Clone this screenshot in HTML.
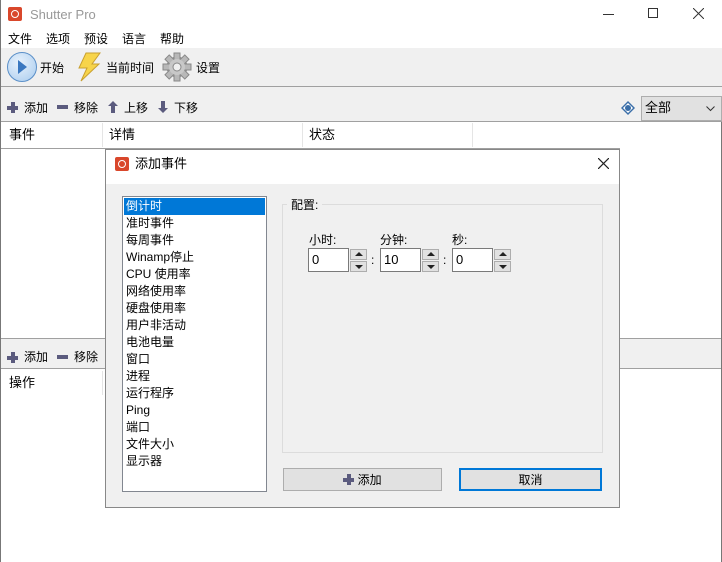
<!DOCTYPE html>
<html><head><meta charset="utf-8"><style>
*{margin:0;padding:0;box-sizing:border-box}
body{width:722px;height:562px;position:relative;overflow:hidden;background:#fff;font-family:"Liberation Sans","Noto Sans CJK SC",sans-serif;font-size:12px;color:#000;line-height:16px}
.a{position:absolute;white-space:nowrap}
.plus{display:inline-block;width:11px;height:11px;position:relative;vertical-align:-1px}
.plus:before{content:"";position:absolute;left:4px;top:0;width:4px;height:11px;background:#5b5b7e}
.plus:after{content:"";position:absolute;left:0;top:4px;width:11px;height:4px;background:#5b5b7e}
.minus{display:inline-block;width:11px;height:4px;background:#5b5b7e;vertical-align:3px}
.inp{position:absolute;background:#fff;border:1px solid #7a7a7a;height:24px;padding:3px 0 0 3px;font-size:13px}
.spin{position:absolute;width:17px;height:11px;background:#e1e1e1;border:1px solid #adadad}
.li{position:absolute;left:126px;font-size:12px;height:17px;line-height:17px}
</style></head><body>
<!-- title -->
<div class="a" style="left:8px;top:7px;width:14px;height:14px;background:#d9472b;border-radius:2px"><div style="position:absolute;left:3px;top:3px;width:8px;height:8px;border:1.5px solid #fff;border-radius:50%"></div></div>
<div class="a" style="left:30px;top:7px;font-size:13px;color:#999">Shutter Pro</div>
<div class="a" style="left:603px;top:14px;width:11px;height:1px;background:#333"></div>
<div class="a" style="left:648px;top:8px;width:10px;height:10px;border:1px solid #333"></div>
<svg class="a" style="left:693px;top:8px" width="11" height="11"><path d="M0 0L11 11M11 0L0 11" stroke="#333" stroke-width="1"/></svg>
<!-- menu -->
<div class="a" style="left:8px;top:31px">文件</div>
<div class="a" style="left:46px;top:31px">选项</div>
<div class="a" style="left:84px;top:31px">预设</div>
<div class="a" style="left:122px;top:31px">语言</div>
<div class="a" style="left:160px;top:31px">帮助</div>
<!-- toolbar -->
<div class="a" style="left:0;top:48px;width:722px;height:74px;background:#f0f0f0"></div>
<div class="a" style="left:0;top:86px;width:722px;height:1px;background:#a0a0a0"></div>
<div class="a" style="left:7px;top:52px;width:30px;height:30px;border-radius:50%;background:radial-gradient(circle at 40% 35%,#e8f2fc,#a8cbee);border:1px solid #5a8fc8"></div>
<div class="a" style="left:18px;top:60px;width:0;height:0;border-left:9px solid #3a78c0;border-top:7px solid transparent;border-bottom:7px solid transparent"></div>
<div class="a" style="left:40px;top:60px">开始</div>
<svg class="a" style="left:76px;top:52px" width="26" height="30"><path d="M10 1 L24 1 L16 12 L23 12 L5 29 L11 16 L3 16 Z" fill="#f7d44a" stroke="#c9a030"/></svg>
<div class="a" style="left:106px;top:60px">当前时间</div>
<svg class="a" style="left:162px;top:52px" width="30" height="30"><g fill="#b8b8b8" stroke="#888"><circle cx="15" cy="15" r="10"/><rect x="12" y="1" width="6" height="28"/><rect x="1" y="12" width="28" height="6"/><rect x="12" y="1" width="6" height="28" transform="rotate(45 15 15)"/><rect x="12" y="1" width="6" height="28" transform="rotate(-45 15 15)"/></g><circle cx="15" cy="15" r="8" fill="#c8c8c8"/><circle cx="15" cy="15" r="4" fill="#f0f0f0" stroke="#888"/></svg>
<div class="a" style="left:196px;top:60px">设置</div>
<!-- toolbar2 -->
<div class="a" style="left:7px;top:100px"><span class="plus"></span></div><div class="a" style="left:24px;top:100px">添加</div>
<div class="a" style="left:57px;top:100px"><span class="minus"></span></div><div class="a" style="left:74px;top:100px">移除</div>
<svg class="a" style="left:108px;top:101px" width="10" height="12"><path d="M5 0L10 5H7V12H3V5H0Z" fill="#5b5b7e"/></svg><div class="a" style="left:124px;top:100px">上移</div>
<svg class="a" style="left:158px;top:101px" width="10" height="12"><path d="M5 12L10 7H7V0H3V7H0Z" fill="#5b5b7e"/></svg><div class="a" style="left:174px;top:100px">下移</div>
<svg class="a" style="left:620px;top:100px" width="16" height="16"><path d="M8 1 L15 8 L8 15 L1 8Z" fill="#3a6ea8"/><path d="M8 3 L13 8 L8 13 L3 8Z" fill="#fff"/><circle cx="8" cy="8" r="3" fill="#3a6ea8"/></svg>
<div class="a" style="left:641px;top:96px;width:81px;height:25px;background:#e1e1e1;border:1px solid #adadad"></div>
<div class="a" style="left:645px;top:100px;font-size:13px">全部</div>
<svg class="a" style="left:706px;top:106px" width="9" height="6"><path d="M0.5 0.5L4.5 4.5L8.5 0.5" stroke="#333" fill="none"/></svg>
<div class="a" style="left:0;top:121px;width:722px;height:1px;background:#a0a0a0"></div>
<!-- table header -->
<div class="a" style="left:9px;top:127px;font-size:13px">事件</div>
<div class="a" style="left:102px;top:123px;width:1px;height:24px;background:#e5e5e5"></div>
<div class="a" style="left:109px;top:127px;font-size:13px">详情</div>
<div class="a" style="left:302px;top:123px;width:1px;height:24px;background:#e5e5e5"></div>
<div class="a" style="left:309px;top:127px;font-size:13px">状态</div>
<div class="a" style="left:472px;top:123px;width:1px;height:24px;background:#e5e5e5"></div>
<div class="a" style="left:0;top:148px;width:620px;height:1px;background:#a0a0a0"></div>
<!-- lower bar -->
<div class="a" style="left:0;top:338px;width:722px;height:31px;background:#f0f0f0;border-top:1px solid #a0a0a0;border-bottom:1px solid #a0a0a0"></div>
<div class="a" style="left:7px;top:350px"><span class="plus"></span></div><div class="a" style="left:24px;top:349px">添加</div>
<div class="a" style="left:57px;top:350px"><span class="minus"></span></div><div class="a" style="left:74px;top:349px">移除</div>
<div class="a" style="left:9px;top:375px;font-size:13px">操作</div>
<div class="a" style="left:102px;top:371px;width:1px;height:24px;background:#e5e5e5"></div>
<div class="a" style="left:0;top:0;width:1px;height:562px;background:#777"></div>
<div class="a" style="left:721px;top:122px;width:1px;height:440px;background:#777"></div>
<!-- dialog -->
<div class="a" style="left:105px;top:149px;width:515px;height:359px;background:#f0f0f0;border:1px solid #888"></div>
<div class="a" style="left:106px;top:150px;width:513px;height:34px;background:#fff"></div>
<div class="a" style="left:115px;top:157px;width:14px;height:14px;background:#d9472b;border-radius:2px"><div style="position:absolute;left:3px;top:3px;width:8px;height:8px;border:1.5px solid #fff;border-radius:50%"></div></div>
<div class="a" style="left:135px;top:156px;font-size:13px">添加事件</div>
<svg class="a" style="left:598px;top:158px" width="11" height="11"><path d="M0 0L11 11M11 0L0 11" stroke="#222" stroke-width="1.2"/></svg>
<!-- listbox -->
<div class="a" style="left:122px;top:196px;width:145px;height:296px;background:#fff;border:1px solid #828790"></div>
<div class="a" style="left:124px;top:198px;width:141px;height:17px;background:#0078d7"></div>
<div class="li" style="top:198px;color:#fff">倒计时</div>
<div class="li" style="top:215px">准时事件</div>
<div class="li" style="top:232px">每周事件</div>
<div class="li" style="top:249px">Winamp停止</div>
<div class="li" style="top:266px">CPU 使用率</div>
<div class="li" style="top:283px">网络使用率</div>
<div class="li" style="top:300px">硬盘使用率</div>
<div class="li" style="top:317px">用户非活动</div>
<div class="li" style="top:334px">电池电量</div>
<div class="li" style="top:351px">窗口</div>
<div class="li" style="top:368px">进程</div>
<div class="li" style="top:385px">运行程序</div>
<div class="li" style="top:402px">Ping</div>
<div class="li" style="top:419px">端口</div>
<div class="li" style="top:436px">文件大小</div>
<div class="li" style="top:453px">显示器</div>
<!-- group -->
<div class="a" style="left:282px;top:204px;width:321px;height:249px;border:1px solid #dcdcdc"></div>
<div class="a" style="left:287px;top:197px;background:#f0f0f0;padding:0 4px">配置:</div>
<div class="a" style="left:309px;top:232px">小时:</div>
<div class="a" style="left:380px;top:232px">分钟:</div>
<div class="a" style="left:452px;top:232px">秒:</div>
<div class="inp" style="left:308px;top:248px;width:41px">0</div>
<div class="inp" style="left:380px;top:248px;width:41px">10</div>
<div class="inp" style="left:452px;top:248px;width:41px">0</div>
<div class="spin" style="left:350px;top:249px"></div><div class="spin" style="left:350px;top:261px"></div>
<div class="spin" style="left:422px;top:249px"></div><div class="spin" style="left:422px;top:261px"></div>
<div class="spin" style="left:494px;top:249px"></div><div class="spin" style="left:494px;top:261px"></div>
<div class="a" style="left:355px;top:252px;border-bottom:4px solid #222;border-left:4px solid transparent;border-right:4px solid transparent"></div>
<div class="a" style="left:355px;top:265px;border-top:4px solid #222;border-left:4px solid transparent;border-right:4px solid transparent"></div>
<div class="a" style="left:427px;top:252px;border-bottom:4px solid #222;border-left:4px solid transparent;border-right:4px solid transparent"></div>
<div class="a" style="left:427px;top:265px;border-top:4px solid #222;border-left:4px solid transparent;border-right:4px solid transparent"></div>
<div class="a" style="left:499px;top:252px;border-bottom:4px solid #222;border-left:4px solid transparent;border-right:4px solid transparent"></div>
<div class="a" style="left:499px;top:265px;border-top:4px solid #222;border-left:4px solid transparent;border-right:4px solid transparent"></div>
<div class="a" style="left:371px;top:252px">:</div>
<div class="a" style="left:443px;top:252px">:</div>
<!-- buttons -->
<div class="a" style="left:283px;top:468px;width:159px;height:23px;background:#e1e1e1;border:1px solid #adadad;text-align:center;padding-top:3px"><span class="plus"></span> 添加</div>
<div class="a" style="left:459px;top:468px;width:143px;height:23px;background:#e1e1e1;border:2px solid #0078d7;text-align:center;padding-top:2px">取消</div>
</body></html>
